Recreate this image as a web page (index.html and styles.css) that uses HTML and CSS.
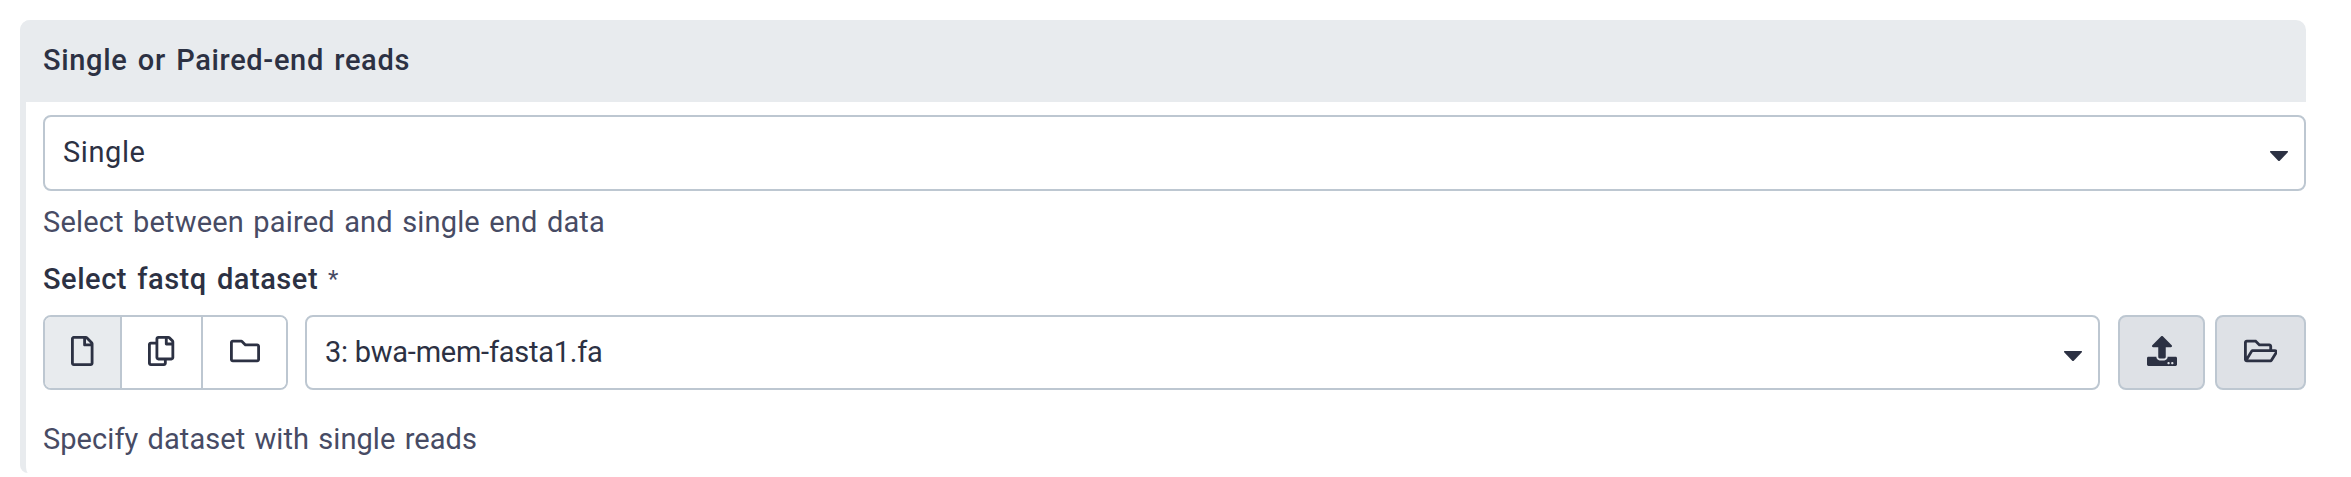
FILE: index.html
```
<!DOCTYPE html>
<html lang="en">
<head>
<meta charset="utf-8">
<title>Single or Paired-end reads</title>
<link rel="stylesheet" href="styles.css">
</head>
<body>
<section class="panel">
  <header class="panel-header"><h2 class="panel-title">Single or Paired-end reads</h2></header>
  <div class="panel-body">
    <div class="select" role="combobox">
      <span class="value-single">Single</span>
      <svg class="caret" viewBox="0 0 18 10"><path d="M1 0h16q2 0 .6 1.6L10 9.4q-1 1-2 0L.4 1.6Q-1 0 1 0z"/></svg>
    </div>
    <p class="help help-mode">Select between paired and single end data</p>
    <div class="label"><span class="label-text">Select fastq dataset</span><span class="required">*</span></div>
    <div class="row">
      <div class="group">
        <button class="toggle toggle-file active" aria-label="Single dataset"><svg class="icon" viewBox="0 0 384 512"><path d="M369.9 97.9L286 14C277 5 264.8-.1 252.1-.1H48C21.5 0 0 21.5 0 48v416c0 26.5 21.5 48 48 48h288c26.5 0 48-21.5 48-48V131.9c0-12.7-5.1-25-14.1-34zM332.1 128H256V51.9l76.1 76.1zM48 464V48h160v104c0 13.3 10.7 24 24 24h104v288H48z"/></svg></button>
        <button class="toggle toggle-copy" aria-label="Multiple datasets"><svg class="icon" viewBox="0 0 448 512"><path d="M433.941 65.941l-51.882-51.882A48 48 0 0 0 348.118 0H176c-26.51 0-48 21.49-48 48v48H48c-26.51 0-48 21.49-48 48v320c0 26.51 21.49 48 48 48h224c26.51 0 48-21.49 48-48v-48h80c26.51 0 48-21.49 48-48V99.882a48 48 0 0 0-14.059-33.941zM266 464H54a6 6 0 0 1-6-6V150a6 6 0 0 1 6-6h74v224c0 26.51 21.49 48 48 48h96v42a6 6 0 0 1-6 6zm128-96H182a6 6 0 0 1-6-6V54a6 6 0 0 1 6-6h106v88c0 13.255 10.745 24 24 24h88v202a6 6 0 0 1-6 6zm6-256h-64V48h9.632c1.591 0 3.117.632 4.243 1.757l48.368 48.368a6 6 0 0 1 1.757 4.243V112z"/></svg></button>
        <button class="toggle toggle-folder" aria-label="Dataset collection"><svg class="icon" viewBox="0 0 512 512"><path d="M464 128H272l-54.63-54.63c-6-6-14.14-9.37-22.63-9.37H48C21.49 64 0 85.49 0 112v288c0 26.51 21.49 48 48 48h416c26.51 0 48-21.49 48-48V176c0-26.51-21.49-48-48-48zm0 272H48V112h140.12l54.63 54.63c6 6 14.14 9.37 22.63 9.37H464v224z"/></svg></button>
      </div>
      <div class="select select-dataset" role="combobox">
        <span class="value-dataset">3: bwa-mem-fasta1.fa</span>
        <svg class="caret" viewBox="0 0 18 10"><path d="M1 0h16q2 0 .6 1.6L10 9.4q-1 1-2 0L.4 1.6Q-1 0 1 0z"/></svg>
      </div>
      <button class="action action-upload" aria-label="Upload"><svg class="icon" viewBox="0 0 512 512"><path d="M296 384h-80c-13.3 0-24-10.7-24-24V192h-87.7c-17.8 0-26.7-21.5-14.1-34.1L242.3 5.7c7.5-7.5 19.8-7.5 27.3 0l152.2 152.2c12.6 12.6 3.7 34.1-14.1 34.1H320v168c0 13.3-10.7 24-24 24zm216-8v112c0 13.3-10.7 24-24 24H24c-13.3 0-24-10.7-24-24V376c0-13.3 10.7-24 24-24h136v8c0 30.9 25.1 56 56 56h80c30.9 0 56-25.1 56-56v-8h136c13.3 0 24 10.7 24 24zm-124 88c0-11-9-20-20-20s-20 9-20 20 9 20 20 20 20-9 20-20zm64 0c0-11-9-20-20-20s-20 9-20 20 9 20 20 20 20-9 20-20z"/></svg></button>
      <button class="action action-browse" aria-label="Browse"><svg class="icon" viewBox="0 0 576 512"><path d="M527.9 224H480v-48c0-26.5-21.5-48-48-48H272l-64-64H48C21.5 64 0 85.5 0 112v288c0 26.5 21.5 48 48 48h400c16.5 0 31.9-8.5 40.7-22.6l79.9-128c20-31.9-3-73.4-40.7-73.4zM48 118c0-3.3 2.7-6 6-6h134.1l64 64H426c3.3 0 6 2.7 6 6v42H152c-16.8 0-32.4 8.8-41.1 23.2L48 351.4V118zm400 282H72l77.2-128H528z"/></svg></button>
    </div>
    <p class="help help-dataset">Specify dataset with single reads</p>
  </div>
</section>
</body>
</html>
```
FILE: styles.css
```
* { box-sizing: border-box; }
body {
  margin: 0;
  padding: 20px 45px 0 20px;
  background: #fff;
  color: #2c3143;
  font-family: Roboto, "Liberation Sans", sans-serif;
  font-size: 29px;
  line-height: 40px;
  white-space: nowrap;
}
.panel {
  height: 453px;
  border-left: 6px solid #e8ebee;
  border-radius: 10px 10px 0 8px;
}
.panel-header {
  height: 82px;
  margin-left: -6px;
  padding: 20px 0 0 23px;
  background: #e8ebee;
  border-radius: 10px 10px 0 0;
}
.panel-title {
  margin: 0;
  font-size: 29px;
  font-weight: 500;
  line-height: 40px;
  letter-spacing: .66px;
  word-spacing: 2.5px;
}
.panel-body { padding: 13px 0 0 17px; }
.select {
  display: flex;
  align-items: center;
  justify-content: space-between;
  height: 76px;
  padding: 0 16px 2px 18px;
  border: 2px solid #bdc7d1;
  border-radius: 8px;
  background: #fff;
}
.value-single { letter-spacing: .6px; }
.value-dataset { letter-spacing: -.25px; }
.caret { width: 18px; height: 10px; margin-top: 8px; fill: #2c3143; }
.help { margin: 0; color: #474b64; }
.help-mode { padding-top: 11px; letter-spacing: .17px; word-spacing: 2px; }
.label {
  display: flex;
  padding-top: 17px;
  font-weight: 500;
}
.label-text { letter-spacing: .53px; word-spacing: 2.5px; }
.required { margin-left: 10px; font-size: 24px; font-weight: 400; color: #474b64; }
.row { display: flex; height: 75px; margin-top: 16px; }
.row .select { height: 75px; }
.group {
  display: flex;
  width: 245px;
  border: 2px solid #bdc7d1;
  border-radius: 8px;
  overflow: hidden;
}
.toggle, .action {
  display: flex;
  align-items: center;
  justify-content: center;
  margin: 0;
  padding: 0 0 4px;
  border: 0;
  background: #fff;
}
.toggle + .toggle { border-left: 2px solid #bdc7d1; }
.toggle-file { width: 75px; }
.toggle-copy { width: 81px; }
.toggle-folder { flex: 1; }
.toggle.active { background: #e8ebee; }
.icon { height: 30px; fill: #2c3143; }
.select-dataset { flex: 1; margin-left: 17px; }
.action { border: 2px solid #bdc7d1; border-radius: 8px; background: #dee1e6; }
.action-upload { width: 87px; margin-left: 18px; }
.action-browse { width: 91px; margin-left: 10px; }
.help-dataset { padding-top: 29px; letter-spacing: .06px; word-spacing: 2px; }
```
